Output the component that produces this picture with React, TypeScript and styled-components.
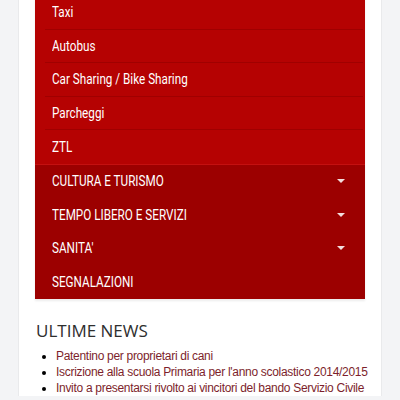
import React from 'react';
import styled, { createGlobalStyle } from 'styled-components';

const GlobalStyle = createGlobalStyle`
  html, body {
    margin: 0;
    padding: 0;
    background: #f3f4f6;
    overflow: hidden;
  }
`;

interface MenuItem {
  label: string;
  hasChildren?: boolean;
}

const subItems: MenuItem[] = [
  { label: 'Taxi' },
  { label: 'Autobus' },
  { label: 'Car Sharing / Bike Sharing' },
  { label: 'Parcheggi' },
  { label: 'ZTL' },
];

const topItems: MenuItem[] = [
  { label: 'CULTURA E TURISMO', hasChildren: true },
  { label: 'TEMPO LIBERO E SERVIZI', hasChildren: true },
  { label: "SANITA'", hasChildren: true },
  { label: 'SEGNALAZIONI' },
];

const news = [
  'Patentino per proprietari di cani',
  "Iscrizione alla scuola Primaria per l'anno scolastico 2014/2015",
  'Invito a presentarsi rivolto ai vincitori del bando Servizio Civile 2014',
];

const App: React.FC = () => {
  return (
    <>
      <GlobalStyle />
      <Page>
        <Panel>
          <Menu>
            <SubList>
              {subItems.map((item) => (
                <SubRow key={item.label}>
                  <Label>{item.label}</Label>
                </SubRow>
              ))}
            </SubList>
            {topItems.map((item) => (
              <TopRow key={item.label}>
                <Label>{item.label}</Label>
                {item.hasChildren && <Caret />}
              </TopRow>
            ))}
          </Menu>
          <News>
            <h2>ULTIME NEWS</h2>
            <ul>
              {news.map((n) => (
                <li key={n}>
                  <a href="#">{n}</a>
                </li>
              ))}
            </ul>
          </News>
        </Panel>
      </Page>
    </>
  );
};

const Page = styled.div`
  padding: 0 18px;
  height: 400px;
`;

const Panel = styled.div`
  background: #fff;
  border-left: 1px solid #e9eaec;
  border-right: 1px solid #e9eaec;
  padding: 0 16px;
  height: 100%;
`;

const Menu = styled.nav`
  margin-top: -4px;
  font-family: Roboto, 'Liberation Sans', sans-serif;
  font-size: 15px;
  color: #fff;
  box-shadow: 0 2px 2px rgba(0, 0, 0, 0.08);
`;

// the site font is a narrow sans; squeeze a regular one to its width
const Label = styled.span`
  display: inline-block;
  white-space: nowrap;
  transform: scaleX(0.78);
  transform-origin: left center;
`;

const SubList = styled.div`
  background: #b50202;
  border-bottom: 1px solid #c41010;
`;

const SubRow = styled.div`
  height: 33.5px;
  display: flex;
  align-items: center;
  margin: 0 2px 0 10px;
  padding-left: 7px;
  border-bottom: 1px solid #a00000;
  box-sizing: border-box;

  &:last-child {
    border-bottom: none;
  }
`;

const TopRow = styled.div`
  height: 33.5px;
  display: flex;
  align-items: center;
  justify-content: space-between;
  padding: 0 20px 0 17px;
  background: #9c0000;
  box-sizing: border-box;
`;

const Caret = styled.span`
  width: 0;
  height: 0;
  border-left: 4px solid transparent;
  border-right: 4px solid transparent;
  border-top: 4px solid #f2dede;
`;

const News = styled.section`
  padding: 12px 1px 0;
  font-family: 'Liberation Sans', Arial, sans-serif;

  h2 {
    margin: 8px 0 6px;
    font-family: 'Open Sans', 'Liberation Sans', sans-serif;
    font-size: 17px;
    font-weight: 400;
    color: #2e2e2e;
  }

  ul {
    margin: 0 -12px 0 0;
    padding-left: 20px;
    font-size: 12px;
    letter-spacing: -0.3px;
    line-height: 16px;
  }

  a {
    color: #7d1f2c;
    text-decoration: none;
  }
`;

export default App;
